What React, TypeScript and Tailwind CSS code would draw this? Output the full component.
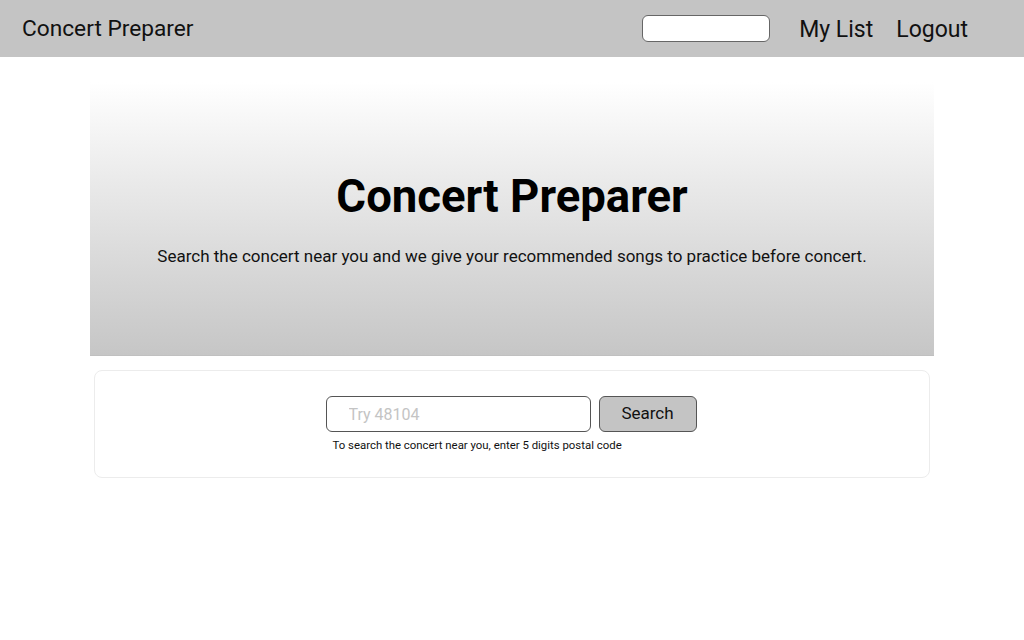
export default function App() {
  return (
    <div className="min-h-[640px] bg-white" style={{ fontFamily: "Roboto, 'Liberation Sans', sans-serif" }}>
      <header className="h-[57px] bg-[#c4c4c4] flex items-center pl-[22px] pr-[56px]">
        <div className="text-[22.7px] text-[#111] leading-none mt-[2px]">Concert Preparer</div>
        <div className="ml-auto flex items-center">
          <input className="w-[128px] h-[27px] bg-white border border-[#666] rounded-[6px] outline-none" />
          <a className="ml-[29px] text-[23px] text-[#111] leading-none mt-[2px]">My List</a>
          <a className="ml-[23px] text-[23px] text-[#111] leading-none mt-[2px]">Logout</a>
        </div>
      </header>
      <main className="w-[844px] mx-auto pt-[25px]">
        <section className="h-[274px] bg-gradient-to-b from-white to-[#c6c6c6] border-b border-[#c0c0c0] flex flex-col items-center justify-center">
          <h1 className="text-[45.5px] font-bold text-black leading-none mt-[2px]">Concert Preparer</h1>
          <p className="mt-[28px] text-[17px] text-[#111] leading-none">Search the concert near you and we give your recommended songs to practice before concert.</p>
        </section>
        <section className="mx-[4px] mt-[14px] h-[108px] border border-[#ececec] rounded-[8px] flex flex-col items-center pt-[25px]">
          <div className="flex items-center gap-[8px] mr-[2px]">
            <input
              placeholder="Try 48104"
              className="w-[265px] h-[36px] border border-[#555] rounded-[6px] pl-[22px] text-[16px] placeholder:text-[#c4c4c4] outline-none"
            />
            <button className="w-[98px] h-[36px] bg-[#c4c4c4] border border-[#555] rounded-[6px] text-[17px] text-[#111]">Search</button>
          </div>
          <p className="mt-[8px] text-[11.4px] text-[#111] w-[371px] pl-[7px] mr-[2px] leading-none">To search the concert near you, enter 5 digits postal code</p>
        </section>
      </main>
    </div>
  );
}
